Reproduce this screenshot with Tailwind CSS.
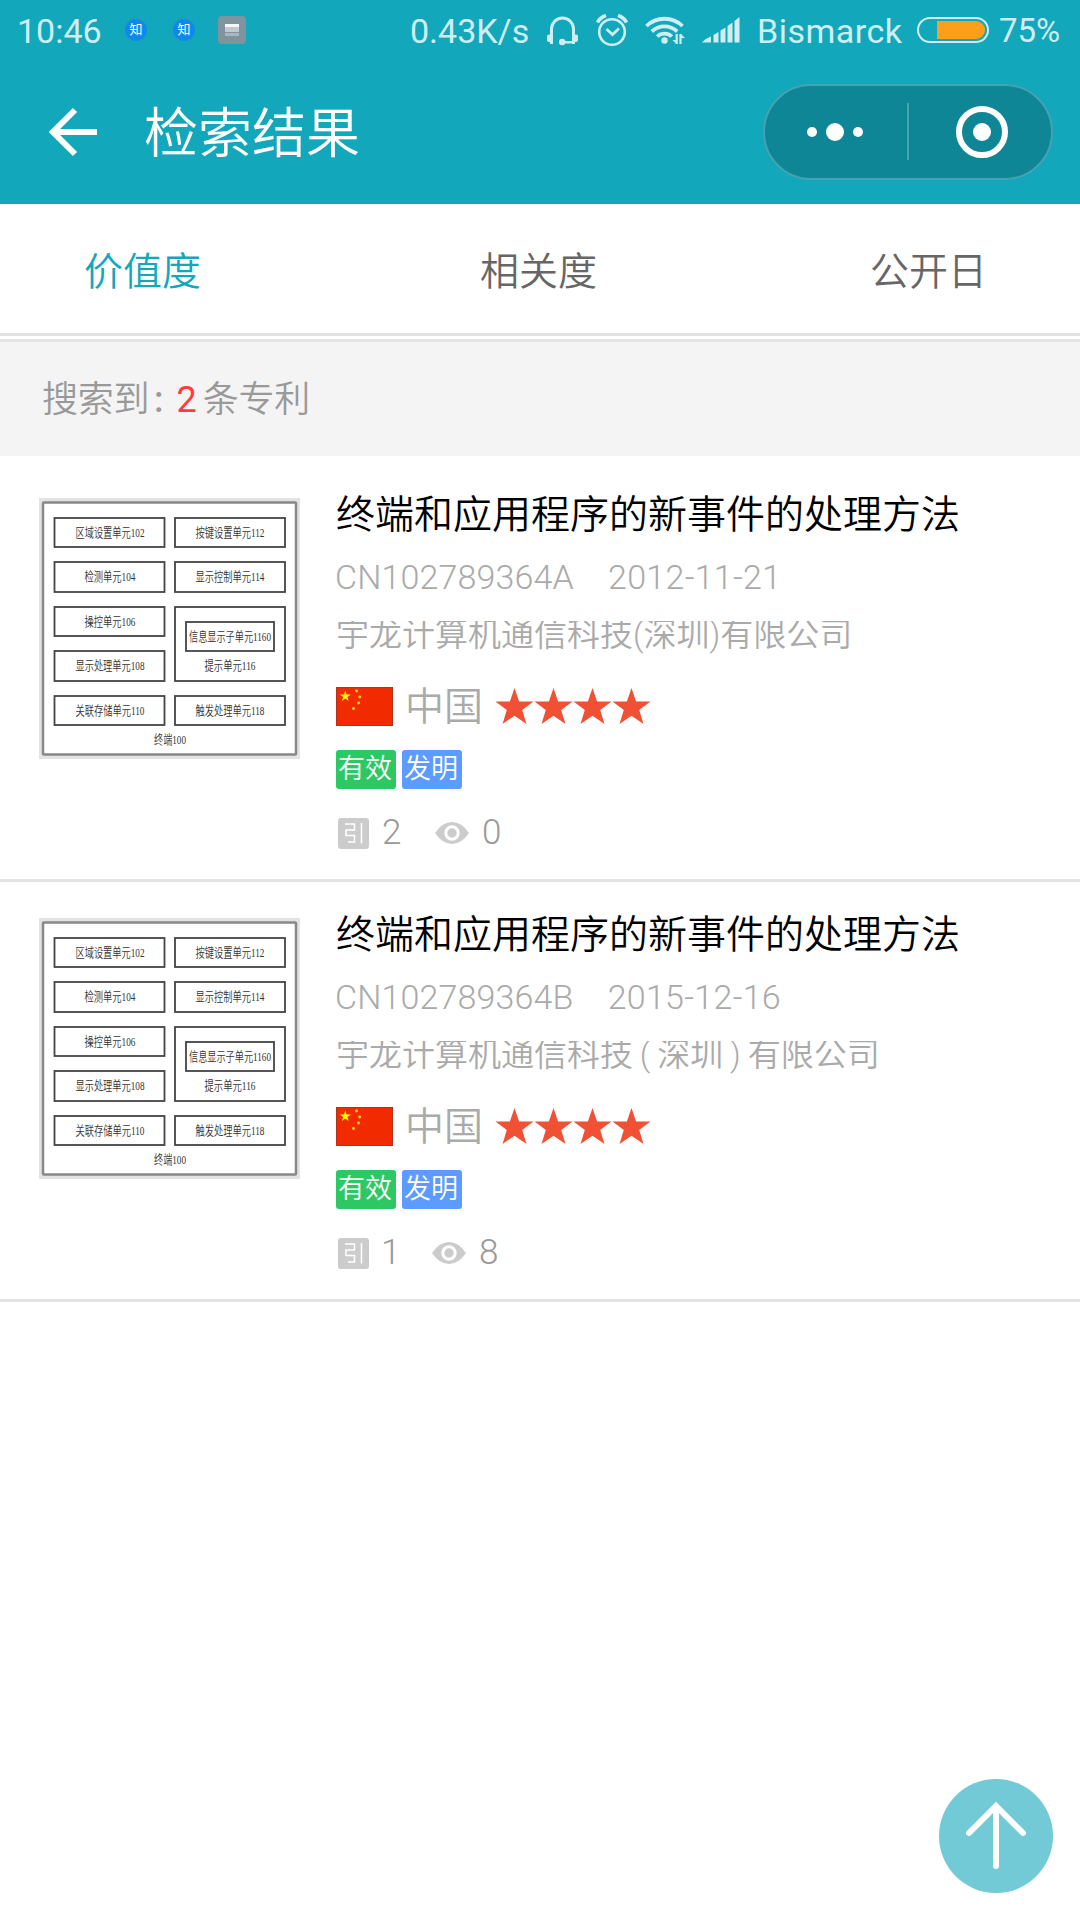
<!DOCTYPE html>
<html lang="zh-CN">
<head>
    <meta charset="UTF-8">
    <meta name="viewport" content="width=device-width, initial-scale=1.0">
    <title>检索结果</title>
    <script src="https://cdn.jsdelivr.net/npm/@tailwindcss/browser@4"></script>
</head>
<body class="bg-white font-['Roboto','Noto_Sans_CJK_SC',sans-serif] font-[350] w-[1080px] h-[1920px] overflow-hidden">
    <!-- Header -->
    <header class="bg-[#13a7bc] h-[204px]">
        <!-- Status Bar -->
        <div class="h-[60px] flex items-center text-[#d0eef2] text-[34px] leading-[60px] whitespace-nowrap font-normal">
            <span class="w-[106px] pl-[17px] pt-[2px] font-[Roboto]">10:46</span>
            <span class="ml-[19px] w-[22px] h-[22px] rounded-full bg-[#1088eb] text-white text-[13px] leading-[21px] text-center">知</span>
            <span class="ml-[26px] w-[22px] h-[22px] rounded-full bg-[#1088eb] text-white text-[13px] leading-[21px] text-center">知</span>
            <svg class="ml-[23px]" width="28" height="28" viewBox="0 0 28 28">
                <rect width="28" height="28" rx="4" fill="#8094a0"/>
                <rect x="7" y="8" width="14" height="3" fill="#f4f6f7"/>
                <rect x="7" y="11" width="14" height="5" fill="#bfc9cf"/>
                <rect x="7" y="17" width="14" height="3" fill="#aab7bf"/>
            </svg>
            <span class="ml-[164px] w-[137px] pt-[2px]">0.43K/s</span>
            <svg width="31" height="31" viewBox="0 0 31 31" fill="none" stroke="#d0eef2" stroke-width="3">
                <path d="M4.500 22V14a11 11 0 0 1 22 0v8"/>
                <path d="M16 27.300h12" stroke-width="2.400"/>
                <path d="M0 21.500q0-2 2-2h4V29H3V27H2q-2 0-2-2zM31 21.500q0-2-2-2h-4V29h3V27h1q2 0 2-2z" fill="#d0eef2" stroke="none"/>
                <circle cx="15.200" cy="27" r="3.200" fill="#d0eef2" stroke="none"/>
            </svg>
            <svg class="ml-[18px]" width="32" height="34" viewBox="0 0 32 34" fill="none" stroke="#d0eef2" stroke-width="2.600">
                <circle cx="16" cy="19" r="12.800"/>
                <path d="M10.500 16l6 5.500 6.500-6" stroke-width="2.800"/>
                <path d="M1.500 9.500Q4 4.500 10 2.500M30.500 9.500Q28 4.500 22 2.500" stroke-width="3.600"/>
            </svg>
            <svg class="ml-[17px]" width="41" height="30" viewBox="0 0 41 30" fill="none" stroke="#d0eef2" stroke-width="3.800">
                <path d="M1.500 11a26 26 0 0 1 36 0M6.800 16.500a18.500 18.500 0 0 1 25.400 0M12.200 21.500a10.500 10.500 0 0 1 14.600 0"/>
                <circle cx="19.500" cy="25.500" r="3.200" fill="#d0eef2" stroke="none"/>
                <path d="M31.700 19v10M35.500 19v10" stroke-width="2.200"/>
                <path d="M27.500 25h4v4zM35.500 18.500v4.500h4.500z" fill="#d0eef2" stroke="none"/>
            </svg>
            <svg class="ml-[16px]" width="38" height="26" viewBox="0 0 38 26" fill="#d0eef2">
                <path d="M0 25.500Q4 21 9 19.500v6zM11.500 18l5-3v10.500h-5zM18.500 13.500l5-3v15h-5zM25.500 9l5-3.500v20h-5zM32.500 4l5-4v25.500h-5z"/>
            </svg>
            <span class="ml-[17px] w-[160px] pt-[2px] tracking-[0.5px]">Bismarck</span>
            <svg width="72" height="26" viewBox="0 0 72 26">
                <rect x="1" y="1" width="70" height="24" rx="12" fill="none" stroke="#d0eef2" stroke-width="2"/>
                <path d="M20 4h39a9 9 0 0 1 0 18H20z" fill="#ff9e1b"/>
            </svg>
            <span class="ml-[10px] pt-[2px] text-[33px] font-[Roboto]">75%</span>
        </div>
        <!-- Title Bar -->
        <div class="h-[144px] flex items-center pl-[48px] pr-[27px]">
            <svg width="50" height="50" viewBox="0 0 50 50" fill="none" stroke="#fff" stroke-width="6">
                <path d="M49 25H5M27 3L5 25l22 22"/>
            </svg>
            <h1 class="ml-[46px] pt-[6px] text-white text-[54px] leading-[72px]">检索结果</h1>
            <div class="ml-auto w-[290px] h-[96px] rounded-full bg-[#0f8696] border-2 border-[#44a3b1] flex items-center">
                <svg width="286" height="60" viewBox="0 0 286 60" fill="#fff">
                    <circle cx="47" cy="30" r="5"/>
                    <circle cx="70" cy="30" r="9"/>
                    <circle cx="93" cy="30" r="5"/>
                    <rect x="142" y="1" width="2" height="57" fill="#44a3b1"/>
                    <circle cx="217" cy="30" r="23" fill="none" stroke="#fff" stroke-width="6"/>
                    <circle cx="217" cy="30" r="9"/>
                </svg>
            </div>
        </div>
    </header>

    <!-- Tabs -->
    <nav class="h-[132px] border-b-[3px] border-[#e3e3e3] flex items-center pt-[7px] pl-[84px] gap-[276px] whitespace-nowrap text-[39px] text-[#666]">
        <a class="w-[120px] text-[#13a7bc]">价值度</a>
        <a class="w-[114px]">相关度</a>
        <a>公开日</a>
    </nav>

    <!-- Result Count -->
    <div class="mt-[3px] h-[117px] border-t-[3px] border-[#e3e3e3] bg-[#f4f4f4] flex items-center pt-[2px] pl-[42px] text-[36px] text-[#999]">
        <span class="tracking-[-0.3px]">搜索到</span><span class="ml-[5px] font-medium">:</span><span class="ml-[13px] font-normal text-[#ff3d3d]">2</span><span class="ml-[6px] tracking-[-0.3px]">条专利</span>
    </div>

    <!-- Results -->
    <main id="results" class="pt-[6px]"></main>

    <!-- Back To Top -->
    <button class="fixed right-[27px] bottom-[27px] w-[114px] h-[114px] rounded-full bg-[#72cad6] flex items-center justify-center">
        <svg width="114" height="114" viewBox="0 0 114 114" fill="none" stroke="#fff" stroke-width="6" stroke-linecap="round">
            <path d="M57 87V27M30 54l27-27 27 27"/>
        </svg>
    </button>

    <script>
        const patents = [
            { title: '终端和应用程序的新事件的处理方法', code: 'CN102789364A', date: '2012-11-21', owner: '宇龙计算机通信科技(深圳)有限公司', cited: 2, views: 0 },
            { title: '终端和应用程序的新事件的处理方法', code: 'CN102789364B', date: '2015-12-16', owner: '宇龙计算机通信科技 ( 深圳 ) 有限公司', cited: 1, views: 8 }
        ];

        // x, y, width, height, label, label centre x, label baseline y, label width
        const units = [
            [15.5, 20, 110, 29, '区域设置单元102', 71, 39, 69],
            [136, 20, 110, 29, '按键设置单元112', 191, 39, 69],
            [15.5, 64, 110, 30, '检测单元104', 71, 83, 51],
            [136, 64, 110, 30, '显示控制单元114', 191, 83, 69],
            [15.5, 109, 110, 29, '操控单元106', 71, 128, 51],
            [136, 109, 110, 74, '提示单元116', 191, 172, 51],
            [147, 124, 88, 29, '信息显示子单元1160', 191, 143, 82],
            [15.5, 153, 110, 30, '显示处理单元108', 71, 172, 69],
            [15.5, 198, 110, 29, '关联存储单元110', 71, 217, 69],
            [136, 198, 110, 29, '触发处理单元118', 191, 217, 69]
        ];

        const label = (text, x, y, w) =>
            `<text x="${x - w / 2}" y="${y}" textLength="${w}" lengthAdjust="spacingAndGlyphs" fill="#333">${text}</text>`;

        const diagram = `
            <svg class="mt-[12px] shrink-0 font-['Liberation_Serif','Noto_Sans_CJK_SC',serif] text-[13px] font-[350]" width="261" height="261" viewBox="0 0 261 261">
                <rect width="261" height="261" fill="#e3e3e3"/>
                <rect x="4" y="4.500" width="253" height="252" rx="1" fill="#fff" stroke="#888" stroke-width="2.500"/>
                ${units.map(u => `<rect x="${u[0]}" y="${u[1]}" width="${u[2]}" height="${u[3]}" fill="none" stroke="#444" stroke-width="1.800"/>${label(u[4], u[5], u[6], u[7])}`).join('')}
                ${label('终端100', 131, 246, 32)}
            </svg>`;

        const star = `
            <svg width="39" height="39" viewBox="0 0 39 39" fill="#f05033">
                <path d="M19.500 1l4.600 13.500H38.500L27.200 23l4.300 14-12-8.300-12 8.300 4.300-14L.500 14.500h14.400z"/>
            </svg>`;

        document.getElementById('results').innerHTML = patents.map(p => `
            <article class="h-[420px] border-b-[3px] border-[#e3e3e3] pl-[39px] pt-[24px] flex whitespace-nowrap">
                ${diagram}
                <div class="ml-[36px]">
                    <h2 class="h-[56px] leading-[59px] text-[39px] text-black">${p.title}</h2>
                    <p class="h-[70px] leading-[70px] text-[34px] text-[#aaa] flex"><span class="-ml-px tracking-[0.15px]">${p.code}</span><span class="ml-[34px] tracking-[0.3px]">${p.date}</span></p>
                    <p class="h-[46px] leading-[46px] text-[33px] text-[#aaa] [word-spacing:-1.2px] [clip-path:inset(9px_0_0_0)]">${p.owner}</p>
                    <div class="mt-[29px] h-[39px] flex items-center">
                        <svg width="57" height="39" viewBox="0 0 57 39">
                            <rect x=".5" y=".5" width="56" height="38" fill="#f22a00" stroke="#b5301a"/>
                            <path d="M9.300 3.500l1.300 4h4.200l-3.400 2.500 1.300 4-3.400-2.500L5.900 14l1.300-4-3.400-2.500H8z" fill="#ff0"/>
                            <g fill="#fd0"><circle cx="20.500" cy="4" r="1.400"/><circle cx="23.700" cy="10" r="1.400"/><circle cx="22.500" cy="16" r="1.400"/><circle cx="17.500" cy="21.500" r="1.400"/></g>
                        </svg>
                        <span class="ml-[12px] mr-[12px] pt-[2px] text-[39px] leading-[39px] text-[#aaa]">中国</span>
                        ${star.repeat(4)}
                    </div>
                    <div class="mt-[24px] flex gap-[6px] text-white text-[27px] leading-[38px]">
                        <span class="w-[60px] h-[39px] pl-[2px] rounded-[3px] bg-[#2dc863]">有效</span>
                        <span class="w-[60px] h-[39px] pl-[2px] rounded-[3px] bg-[#5c9bff]">发明</span>
                    </div>
                    <div class="mt-[23px] h-[42px] flex items-center text-[35px] leading-[42px] text-[#999]">
                        <svg class="ml-[2px]" width="31" height="31" viewBox="0 0 31 31" fill="none" stroke="#fff" stroke-width="1.500">
                            <rect width="31" height="31" rx="3" fill="#ccc" stroke="none"/>
                            <path d="M7 6h9.500v6H8v5.500h8.500V24H10M23.500 5v20.500"/>
                        </svg>
                        <span class="${p.cited === 1 ? 'ml-[12px] w-[18px]' : 'ml-[13px] w-[20px]'}">${p.cited}</span>
                        <svg class="ml-[33px] mr-[13px]" width="34" height="22" viewBox="0 0 34 22">
                            <path d="M0 11Q7.500 0 17 0t17 11Q26.500 22 17 22T0 11z" fill="#ccc"/>
                            <circle cx="17" cy="11" r="6.200" fill="#ccc" stroke="#fff" stroke-width="3"/>
                        </svg>
                        <span>${p.views}</span>
                    </div>
                </div>
            </article>`).join('');
    </script>
</body>
</html>
